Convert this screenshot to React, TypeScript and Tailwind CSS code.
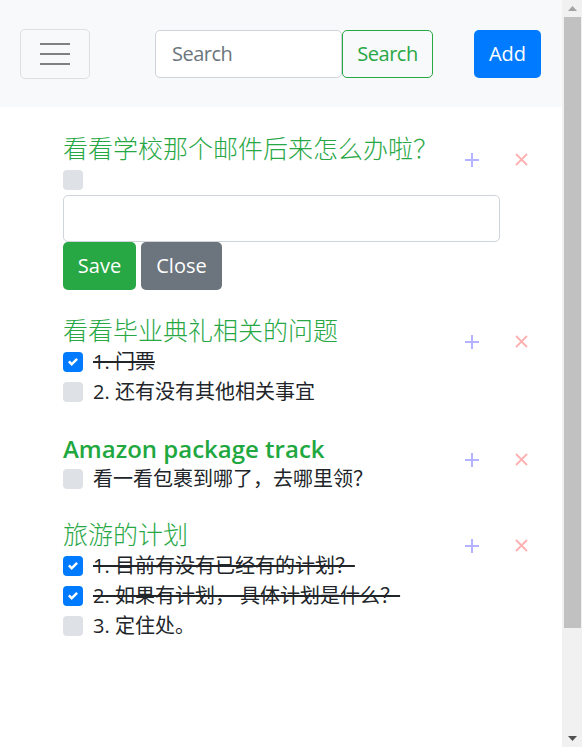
import React from "react";

const FONT = "font-['Open_Sans','Noto_Sans_CJK_SC',sans-serif]";

function Check({ checked }: { checked: boolean }) {
  return checked ? (
    <span className="w-[20px] h-[20px] rounded-[4px] bg-[#007bff] flex items-center justify-center shrink-0">
      <svg width="10" height="10" viewBox="0 0 8 8">
        <path fill="#fff" d="M6.564.75l-3.59 3.612-1.538-1.55L0 4.26 2.974 7.25 8 2.193z" />
      </svg>
    </span>
  ) : (
    <span className="w-[20px] h-[20px] rounded-[4px] bg-[#dee2e6] shrink-0" />
  );
}

function Row({ text, checked }: { text?: string; checked: boolean }) {
  return (
    <div className="flex items-center h-[30px]">
      <Check checked={checked} />
      {text ? (
        <span
          className={
            "ml-[10px] text-[20px] leading-[30px] text-[#212529] whitespace-nowrap " +
            (checked ? "line-through decoration-2 decoration-[#212529]" : "")
          }
        >
          {text}
        </span>
      ) : null}
    </div>
  );
}

function TitleRow({ title, latin }: { title: string; latin?: boolean }) {
  return (
    <div className="flex items-start h-[29px]">
      <h4
        className={
          "w-[402px] whitespace-nowrap leading-[29px] " +
          (latin ? "text-[24px] font-semibold text-[#1fa83f]" : "text-[25px] font-light text-[#28a745]")
        }
      >
        {title}
      </h4>
      <svg className="mt-[19px] shrink-0" width="14" height="14" viewBox="0 0 14 14">
        <path d="M7 0v14M0 7h14" stroke="#b3b3ff" strokeWidth="2" />
      </svg>
      <svg className="mt-[19px] ml-[36px] shrink-0" width="13" height="13" viewBox="0 0 13 13">
        <path d="M1 1l11 11M12 1L1 12" stroke="#ffb0b0" strokeWidth="1.8" />
      </svg>
    </div>
  );
}

export default function App() {
  return (
    <div className={"flex w-[584px] h-[747px] overflow-hidden bg-white " + FONT}>
      <div className="w-[562px] flex flex-col">
        <nav className="h-[107px] bg-[#f8f9fa] flex items-center pl-[20px]">
          <div className="w-[70px] h-[50px] border border-[rgba(0,0,0,0.1)] rounded-[5px] flex flex-col items-center justify-center gap-[8px]">
            <span className="w-[30px] h-[2px] bg-[#808080]" />
            <span className="w-[30px] h-[2px] bg-[#808080]" />
            <span className="w-[30px] h-[2px] bg-[#808080]" />
          </div>
          <div className="ml-[65px] flex">
            <div className="w-[187px] h-[48px] rounded-[5px] border border-[#ced4da] bg-white px-[16px] flex items-center text-[20px] tracking-[-0.5px] text-[#6c757d]">
              Search
            </div>
            <div className="w-[91px] h-[48px] rounded-[5px] border border-[#28a745] flex items-center justify-center text-[20px] tracking-[-0.5px] text-[#28a745]">
              Search
            </div>
          </div>
          <div className="ml-[41px] w-[67px] h-[48px] rounded-[5px] bg-[#007bff] flex items-center justify-center text-[20px] text-white">
            Add
          </div>
        </nav>
        <div className="pl-[63px] pt-[27px] flex flex-col">
          <div className="flex flex-col mb-[26px]">
            <TitleRow title="看看学校那个邮件后来怎么办啦？" />
            <div className="mt-[2px] w-[437px] flex flex-col">
              <Row checked={false} />
              <div className="h-[47px] rounded-[5px] border border-[#ced4da] bg-white" />
              <div className="flex">
                <div className="w-[73px] h-[48px] rounded-[5px] bg-[#28a745] flex items-center justify-center text-[20px] text-white">
                  Save
                </div>
                <div className="ml-[5px] w-[81px] h-[48px] rounded-[5px] bg-[#6c757d] flex items-center justify-center text-[20px] text-white">
                  Close
                </div>
              </div>
            </div>
          </div>
          <div className="flex flex-col mb-[27px]">
            <TitleRow title="看看毕业典礼相关的问题" />
            <div className="mt-[2px] flex flex-col">
              <Row checked={true} text="1. 门票" />
              <Row checked={false} text="2. 还有没有其他相关事宜" />
            </div>
          </div>
          <div className="flex flex-col mb-[26px]">
            <TitleRow title="Amazon package track" latin />
            <div className="mt-[1px] flex flex-col">
              <Row checked={false} text="看一看包裹到哪了，去哪里领？" />
            </div>
          </div>
          <div className="flex flex-col">
            <TitleRow title="旅游的计划" />
            <div className="mt-[2px] flex flex-col">
              <Row checked={true} text="1. 目前有没有已经有的计划？" />
              <Row checked={true} text="2. 如果有计划， 具体计划是什么？" />
              <Row checked={false} text="3. 定住处。" />
            </div>
          </div>
        </div>
      </div>
      <div className="w-[20px] h-[747px] bg-[#f1f1f1] flex flex-col">
        <div className="h-[17px] flex items-center justify-center">
          <svg width="9" height="5" viewBox="0 0 9 5">
            <path d="M0 5L4.5 0L9 5z" fill="#a3a3a3" />
          </svg>
        </div>
        <div className="ml-[2px] mr-[1px] h-[611px] bg-[#c1c1c1]" />
        <div className="flex-1" />
        <div className="h-[17px] flex items-center justify-center">
          <svg width="9" height="5" viewBox="0 0 9 5">
            <path d="M0 0L4.5 5L9 0z" fill="#505050" />
          </svg>
        </div>
      </div>
      <div className="w-[2px] h-[747px] bg-white" />
    </div>
  );
}
